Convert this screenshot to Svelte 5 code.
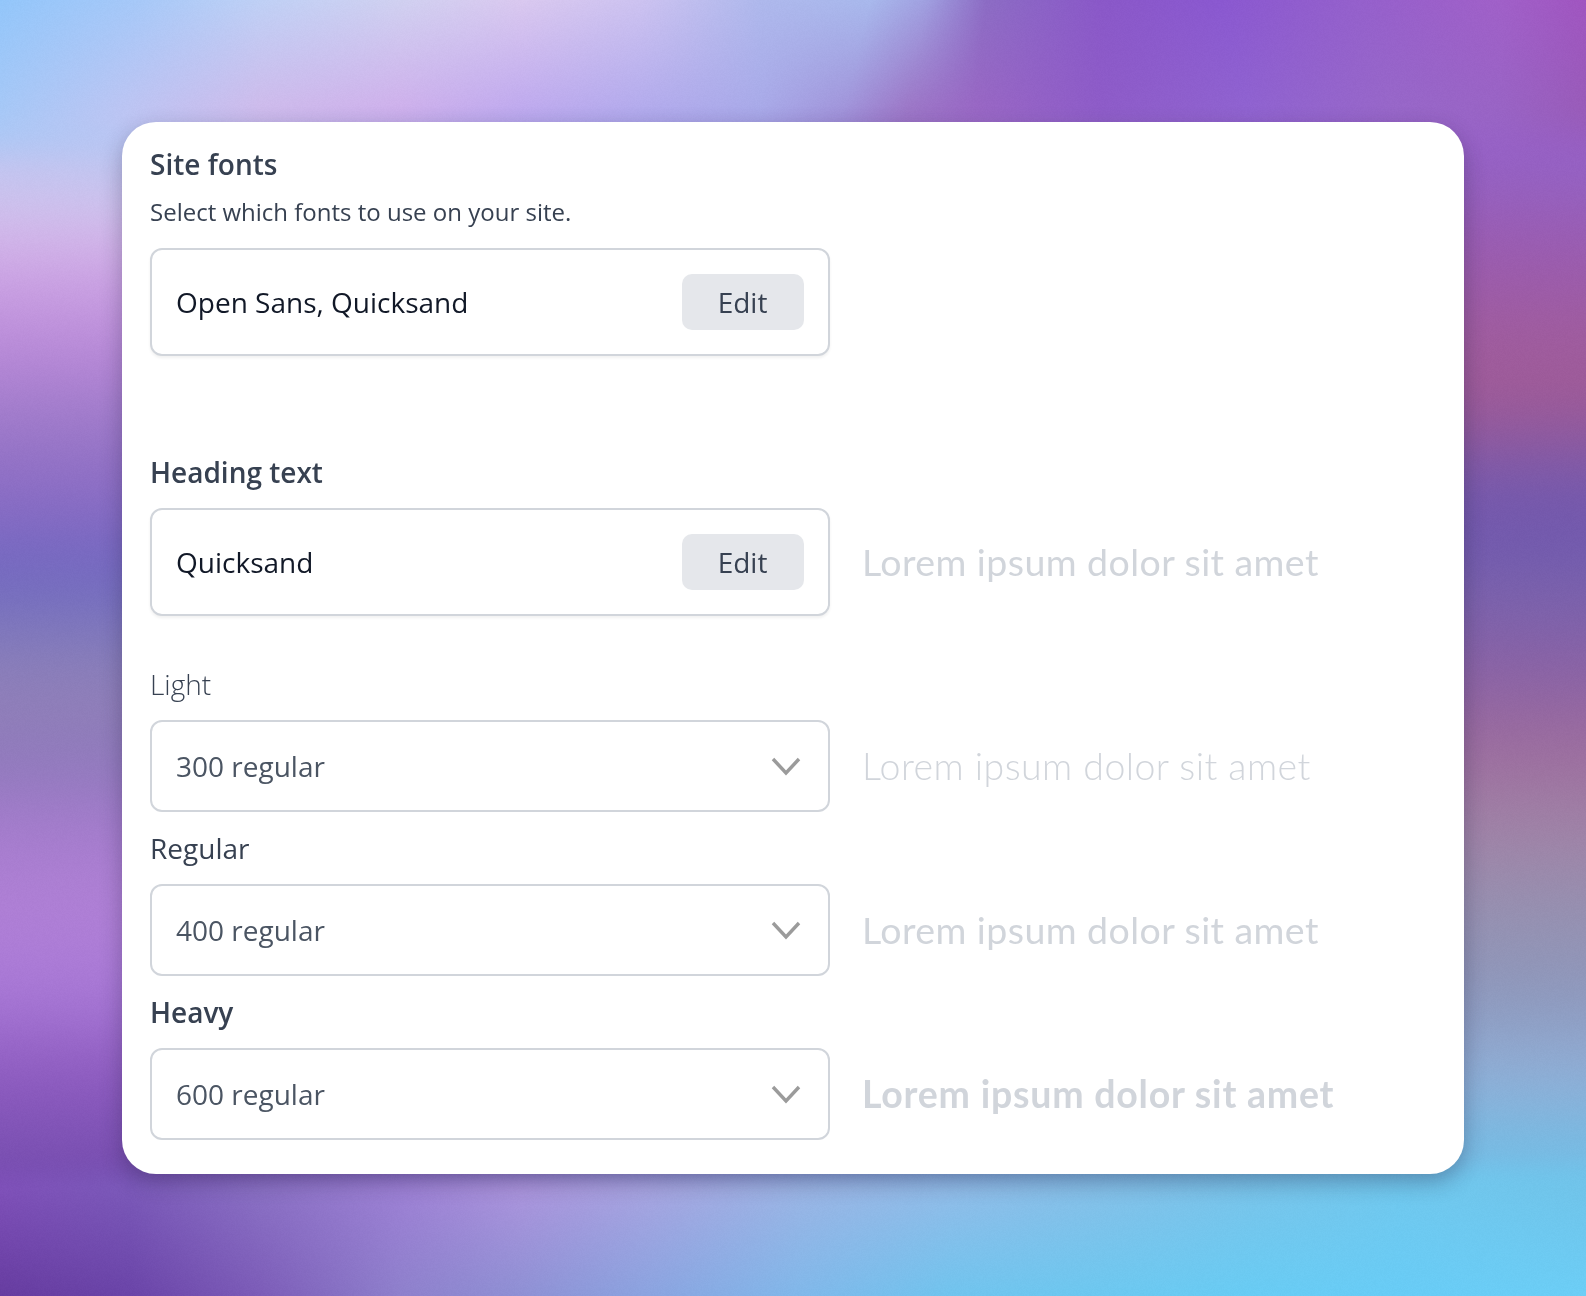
<script>
  const weights = [
    { label: 'Light', cls: 'light', value: '300 regular' },
    { label: 'Regular', cls: 'regular', value: '400 regular' },
    { label: 'Heavy', cls: 'heavy', value: '600 regular' }
  ];
  const lorem = 'Lorem ipsum dolor sit amet';

  const hex = (h) => [parseInt(h.slice(1, 3), 16), parseInt(h.slice(3, 5), 16), parseInt(h.slice(5, 7), 16)];
  const row = (s) => s.split(' ').map((p) => {
    const [x, c] = p.split(':');
    return [+x, hex(c)];
  });

  const top0 = row('0:#93c6fa 130:#a5c8f8 260:#bfd0f5 400:#d0d0f0 520:#d9c8ef 640:#ccc2f0 760:#aeb8ec 870:#a8b8ec 925:#a0a0e0 985:#8c6cc4 1100:#8a58c8 1220:#8a58d0 1350:#9460cc 1500:#a060c8 1586:#a055c0');
  const top1 = row('0:#a8c8f6 130:#c0c4f2 260:#d0b8ea 400:#ceaceb 520:#bca6ee 640:#b0a8ec 760:#a8a8e8 840:#a090d8 905:#9c72c4 975:#9a66c4 1100:#8e5cc8 1250:#9064d0 1400:#9868c8 1500:#9864c4 1586:#985cb8');
  const bot0 = row('0:#7e50b8 130:#7a58b8 260:#8a70c4 400:#9c80d4 520:#aa94dc 650:#a6a4e0 800:#9ab4e4 950:#90bce8 1100:#84c0e8 1250:#78c4ea 1400:#70c8ee 1586:#70c4ea');
  const bot1 = row('0:#663ca0 130:#6a44a8 260:#7c5cb8 400:#8e80cc 520:#8e90d4 650:#8aa4e0 800:#80b8ea 950:#70c4ee 1100:#6cc8f0 1250:#68ccf4 1400:#68ccf6 1586:#6ccef6');
  const left = row('0:#93c6fa 100:#a6c8f6 140:#b8c6f2 190:#cac4ee 225:#d2bcea 260:#cfa9e6 347:#b98ad8 430:#9b78c8 496:#8a6cc4 570:#7268c0 628:#7e78bc 686:#8f80b8 760:#907abc 826:#a47ccc 909:#b080d6 992:#a878d6 1074:#8e5cc0 1157:#7a50b2 1240:#6a42a4 1296:#673fa0');
  const right = row('0:#a055c8 83:#9a5ccc 165:#9462c4 248:#9a5cb0 347:#a05c9c 413:#9a5a98 463:#7f5aa8 529:#7058ae 595:#7a62ac 661:#8862a6 744:#9c6c9e 826:#a082a6 909:#9690b0 992:#8e98bc 1074:#90aed6 1157:#74bce4 1240:#70c8f2 1296:#6ecbf5');

  const mix = (a, b, t) => [a[0] + (b[0] - a[0]) * t, a[1] + (b[1] - a[1]) * t, a[2] + (b[2] - a[2]) * t];
  const smooth = (a, b, v) => {
    const t = Math.min(1, Math.max(0, (v - a) / (b - a)));
    return t * t * (3 - 2 * t);
  };

  function sample(stops, v) {
    for (let i = 1; i < stops.length; i++) {
      if (v <= stops[i][0]) {
        const t = (v - stops[i - 1][0]) / (stops[i][0] - stops[i - 1][0]);
        return mix(stops[i - 1][1], stops[i][1], t);
      }
    }
    return stops[stops.length - 1][1];
  }

  function softened(stops, y) {
    let sum = [0, 0, 0];
    const reach = [-32, -16, 0, 16, 32];
    for (const d of reach) {
      const c = sample(stops, Math.max(0, y + d));
      sum = [sum[0] + c[0], sum[1] + c[1], sum[2] + c[2]];
    }
    return [sum[0] / 5, sum[1] / 5, sum[2] / 5];
  }

  function band(a, b, t, x) {
    const stops = a.map((s, i) => [s[0] + (b[i][0] - s[0]) * t, mix(s[1], b[i][1], t)]);
    return sample(stops, x);
  }

  function paint(canvas) {
    const w = canvas.width;
    const h = canvas.height;
    const ctx = canvas.getContext('2d');
    const img = ctx.createImageData(w, h);
    let seed = 12345;
    for (let y = 0; y < h; y++) {
      const l = softened(left, y);
      const r = softened(right, y);
      for (let x = 0; x < w; x++) {
        let c = mix(l, r, smooth(122, 1464, x));
        if (y < 175) {
          c = mix(band(top0, top1, Math.min(1, y / 122), x), c, smooth(100, 175, y));
        } else if (y > 1150) {
          c = mix(c, band(bot0, bot1, Math.max(0, (y - 1190) / 106), x), smooth(1150, 1190, y));
        }
        seed = (seed * 1664525 + 1013904223) >>> 0;
        const n = ((seed >>> 24) / 255 - 0.5) * 3;
        const i = (y * w + x) * 4;
        img.data[i] = c[0] + n;
        img.data[i + 1] = c[1] + n;
        img.data[i + 2] = c[2] + n;
        img.data[i + 3] = 255;
      }
    }
    ctx.putImageData(img, 0, 0);
  }
</script>

<main class="page">
  <canvas class="backdrop" width="1586" height="1296" use:paint></canvas>
  <section class="card">
    <div class="head">
      <h2 class="strong">Site fonts</h2>
      <p class="desc">Select which fonts to use on your site.</p>
    </div>
    <div class="row">
      <div class="box">
        <span class="name">Open Sans, Quicksand</span>
        <button class="edit">Edit</button>
      </div>
    </div>

    <h2 class="strong second">Heading text</h2>
    <div class="row">
      <div class="box">
        <span class="name">Quicksand</span>
        <button class="edit">Edit</button>
      </div>
      <span class="sample">{lorem}</span>
    </div>

    <div class="weights">
      {#each weights as w}
        <div class="weight">
          <div class="label {w.cls}">{w.label}</div>
          <div class="row">
            <div class="select">
              <span>{w.value}</span>
              <svg width="32" height="22" viewBox="0 0 32 22" fill="none" aria-hidden="true">
                <path d="M3 4 L16 18 L29 4" stroke="#9b9b9b" stroke-width="3.4" />
              </svg>
            </div>
            <span class="sample {w.cls}">{lorem}</span>
          </div>
        </div>
      {/each}
    </div>
  </section>
</main>

<style>
  :global(body) {
    margin: 0;
    font-family: "Open Sans", "Noto Sans", sans-serif;
  }
  .page {
    display: grid;
    width: 1586px;
    height: 1296px;
    overflow: hidden;
  }
  .backdrop {
    grid-area: 1 / 1;
    display: block;
  }
  .card {
    grid-area: 1 / 1;
    box-sizing: border-box;
    width: 1342px;
    height: 1052px;
    margin: 122px 0 0 122px;
    padding: 20px 28px 0;
    background: #fff;
    border-radius: 34px;
    box-shadow: 0 8px 22px rgba(30, 25, 60, .32);
  }
  h2, p { margin: 0; }
  .strong {
    font-size: 28px;
    line-height: 44px;
    font-weight: 600;
    color: #374151;
  }
  .desc {
    margin-top: 4px;
    font-size: 24px;
    line-height: 44px;
    color: #374151;
  }
  .head { margin-bottom: 14px; }
  .second { margin-top: 94px; margin-bottom: 14px; }
  .row {
    display: flex;
    align-items: center;
    gap: 32px;
  }
  .box, .select {
    box-sizing: border-box;
    width: 680px;
    flex: none;
    display: flex;
    align-items: center;
    justify-content: space-between;
    background: #fff;
    border: 2px solid #d1d5db;
    border-radius: 12px;
    padding: 0 24px;
  }
  .box {
    height: 108px;
    box-shadow: 0 2px 3px rgba(0, 0, 0, .06);
  }
  .name {
    font-size: 28px;
    color: #111827;
  }
  .edit {
    width: 122px;
    height: 56px;
    border: 0;
    border-radius: 10px;
    background: #e5e7eb;
    font: 400 28px "Open Sans", sans-serif;
    color: #374151;
    padding: 0 1px 0 0;
  }
  .select {
    height: 92px;
    padding-right: 26px;
    font-size: 28px;
    color: #4b5563;
  }
  .sample {
    margin-top: -2px;
    font-family: "Lato", sans-serif;
    font-size: 37.5px;
    letter-spacing: .43px;
    color: #d1d5db;
    white-space: nowrap;
  }
  .sample.light { font-weight: 300; }
  .sample.heavy { font-weight: 700; letter-spacing: .77px; }
  .weights { margin-top: 32px; }
  .label {
    height: 72px;
    box-sizing: border-box;
    padding-top: 15px;
    font-size: 28px;
    line-height: 42px;
    color: #374151;
  }
  .label.light { font-weight: 300; }
  .label.heavy { font-weight: 600; }
</style>
